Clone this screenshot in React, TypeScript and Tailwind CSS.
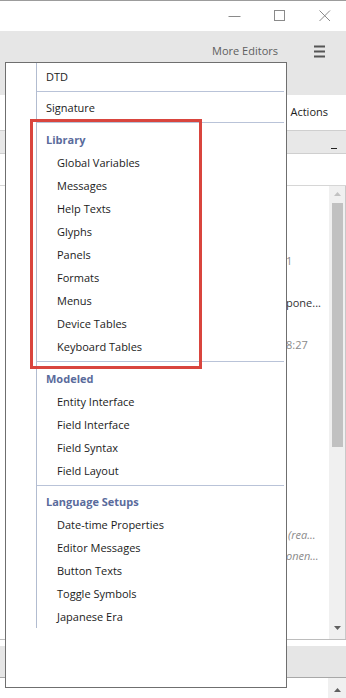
import React from "react";

const font = { fontFamily: '"Open Sans", "Noto Sans", Arial, sans-serif' };

function Item({ children, sub }: { children: React.ReactNode; sub?: boolean }) {
  return (
    <div className={`h-[23px] pt-[2px] flex items-center text-[11px] text-[#1b1b1b] whitespace-nowrap ${sub ? "pl-[20px]" : "pl-[9px]"}`}>
      {children}
    </div>
  );
}

function Header({ children }: { children: React.ReactNode }) {
  return (
    <div className="h-[23px] pt-[2px] flex items-center pl-[9px] text-[11px] font-bold text-[#5a6b9c] whitespace-nowrap">
      {children}
    </div>
  );
}

function Sep() {
  return <div className="h-px bg-[#b9c3d8] mr-[2px]" />;
}

export default function App() {
  return (
    <div className="relative w-[346px] h-[698px] overflow-hidden bg-white" style={font}>
      {/* window top border */}
      <div className="h-px bg-[#9c9c9c]" />
      {/* title bar */}
      <div className="h-[30px] bg-white flex items-center justify-end pr-[15px] gap-[33px]">
        <svg width="13" height="12" viewBox="0 0 13 12">
          <line x1="0.5" y1="6.5" x2="12.5" y2="6.5" stroke="#8a8a8a" strokeWidth="1" />
        </svg>
        <svg width="12" height="12" viewBox="0 0 12 12">
          <rect x="0.5" y="0.5" width="10" height="10" fill="none" stroke="#8a8a8a" strokeWidth="1" />
        </svg>
        <svg width="12" height="12" viewBox="0 0 12 12">
          <path d="M0.5 0.5 L11 11 M11 0.5 L0.5 11" stroke="#8a8a8a" strokeWidth="1" />
        </svg>
      </div>
      {/* toolbar */}
      <div className="h-[64px] bg-[#e6e6e6]">
        <div className="h-[40px] flex items-center justify-end pr-[20px]">
          <span className="text-[11px] text-[#5e5e5e] mr-[36px]">More Editors</span>
          <svg width="12" height="13" viewBox="0 0 12 13">
            <rect x="0" y="0.5" width="11" height="2" fill="#555" />
            <rect x="0" y="5.5" width="11" height="2" fill="#555" />
            <rect x="0" y="10.5" width="11" height="2" fill="#555" />
          </svg>
        </div>
      </div>
      {/* tabs row */}
      <div className="h-[35px] bg-white flex items-center justify-end pr-[18px]">
        <span className="text-[11px] text-[#1b1b1b]">Actions</span>
      </div>
      <div className="h-px bg-[#cfcfcf]" />
      <div className="h-[22px] bg-[#e8e8e8] flex items-end justify-end pr-[9px] pb-[4px]">
        <div className="w-[6px] h-px bg-[#222]" />
      </div>
      <div className="h-px bg-[#cfcfcf]" />
      <div className="h-[31px] bg-white" />
      <div className="h-px bg-[#d6d6d6]" />
      {/* content area */}
      <div className="h-[453px] flex">
        <div className="flex-1 relative">
          <div className="flex flex-col items-end pr-[5px] pt-[67px] text-[11px] text-[#8a8a8a]">
            <div className="w-[38px] h-[16px] leading-[16px]">1</div>
            <div className="w-[38px] h-[16px] leading-[16px] mt-[26px] text-[#333]">pone...</div>
            <div className="w-[38px] h-[16px] leading-[16px] mt-[26px]">8:27</div>
            <div className="w-[38px] h-[16px] leading-[16px] mt-[174px] pl-[2px] italic">(rea...</div>
            <div className="w-[38px] h-[16px] leading-[16px] mt-[5px] italic">onen...</div>
          </div>
        </div>
        <div className="w-[17px] bg-[#f0f0f0] border-r border-[#c9c9c9] flex flex-col items-center">
          <svg className="mt-[5px]" width="9" height="6" viewBox="0 0 9 6">
            <path d="M4.5 1 L8 5 L1 5 Z" fill="#c2c2c2" />
          </svg>
          <div className="mt-[6px] w-[11px] h-[244px] bg-[#c1c1c1]" />
          <div className="flex-1" />
          <svg className="mb-[8px]" width="9" height="6" viewBox="0 0 9 6">
            <path d="M1 1 L8 1 L4.5 5 Z" fill="#606060" />
          </svg>
        </div>
      </div>
      <div className="h-px bg-[#bdbdbd]" />
      <div className="h-[6px] bg-white" />
      <div className="h-[31px] bg-[#e6e6e6]" />
      <div className="h-px bg-[#a8a8a8]" />
      <div className="flex justify-end">
        <div className="w-[18px] h-[20px] bg-[#f0f0f0] flex justify-center pt-[9px]">
          <svg width="9" height="6" viewBox="0 0 9 6">
            <path d="M4.5 1 L8 5 L1 5 Z" fill="#606060" />
          </svg>
        </div>
      </div>

      {/* dropdown menu */}
      <div className="absolute left-[5px] top-[62px] w-[282px] h-[626px] border border-[#6f6f6f] bg-white flex items-start">
        <div className="w-[30px] shrink-0" />
        <div className="flex-1 border-l border-[#b2bcd0] pt-[2px]">
          <Item>DTD</Item>
          <div className="h-[3px]" />
          <Sep />
          <div className="h-[4px]" />
          <Item>Signature</Item>
          <div className="h-[3px]" />
          <Sep />
          <div className="h-[5px]" />
          <Header>Library</Header>
          <Item sub>Global Variables</Item>
          <Item sub>Messages</Item>
          <Item sub>Help Texts</Item>
          <Item sub>Glyphs</Item>
          <Item sub>Panels</Item>
          <Item sub>Formats</Item>
          <Item sub>Menus</Item>
          <Item sub>Device Tables</Item>
          <Item sub>Keyboard Tables</Item>
          <div className="h-[3px]" />
          <Sep />
          <div className="h-[5px]" />
          <Header>Modeled</Header>
          <Item sub>Entity Interface</Item>
          <Item sub>Field Interface</Item>
          <Item sub>Field Syntax</Item>
          <Item sub>Field Layout</Item>
          <div className="h-[3px]" />
          <Sep />
          <div className="h-[4px]" />
          <Header>Language Setups</Header>
          <Item sub>Date-time Properties</Item>
          <Item sub>Editor Messages</Item>
          <Item sub>Button Texts</Item>
          <Item sub>Toggle Symbols</Item>
          <Item sub>Japanese Era</Item>
        </div>
      </div>

      {/* highlight rectangle */}
      <div className="absolute left-[30px] top-[119px] w-[172px] h-[250px] border-[3px] border-[#d9453e]" />
    </div>
  );
}
